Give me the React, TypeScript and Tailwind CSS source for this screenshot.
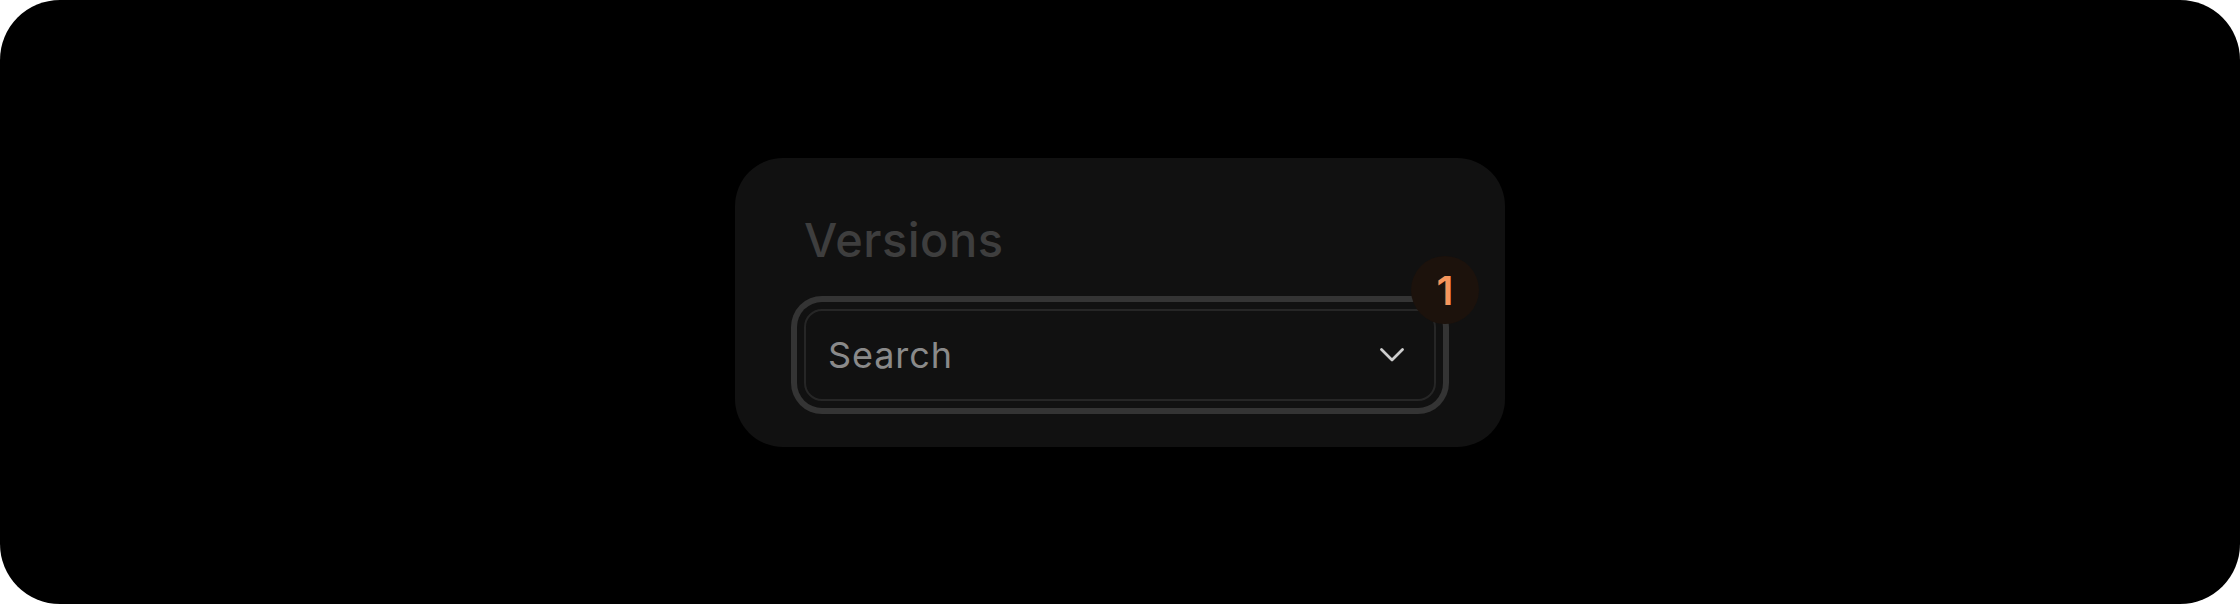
import { useState } from "react";

const App = () => {
  const [value] = useState("");

  return (
    <div className="min-h-screen bg-white">
      <div className="h-[604px] w-full bg-black rounded-[60px] flex items-center justify-center font-[Inter,sans-serif]">
        {/* Versions card */}
        <div className="w-[770px] bg-[#111111] rounded-[48px] px-[69px] pt-[54px] pb-[46px]">
          <h2 className="text-[47px] leading-[56px] font-medium tracking-[0.01em] text-[#3e3e3e]">Versions</h2>

          <div className="relative mt-[41px]">
            <button className="w-full h-[92px] flex items-center justify-between pl-[22px] pr-[30px] border-2 border-[#262626] rounded-[18px] bg-[#111111] ring-[6px] ring-[#343434] ring-offset-[7px] ring-offset-[#111111]">
              <span className="text-[36px] tracking-[0.025em] text-[#8a8a8a]">{value || "Search"}</span>
              <svg width="24" height="15" viewBox="0 0 24 15" fill="none" className="mt-[2px] text-[#cdcdcd]">
                <polyline
                  points="1.5,1.5 12,12 22.5,1.5"
                  stroke="currentColor"
                  strokeWidth="2.75"
                  strokeLinecap="round"
                  strokeLinejoin="round"
                />
              </svg>
            </button>

            {/* count badge */}
            <div className="absolute -right-[43px] -top-[53px] w-[68px] h-[68px] rounded-full bg-[#1c120c] flex items-center justify-center pt-[2px]">
              <span className="text-[40px] leading-none font-semibold text-[#f6965c]">1</span>
            </div>
          </div>
        </div>
      </div>
    </div>
  );
};

export default App;
